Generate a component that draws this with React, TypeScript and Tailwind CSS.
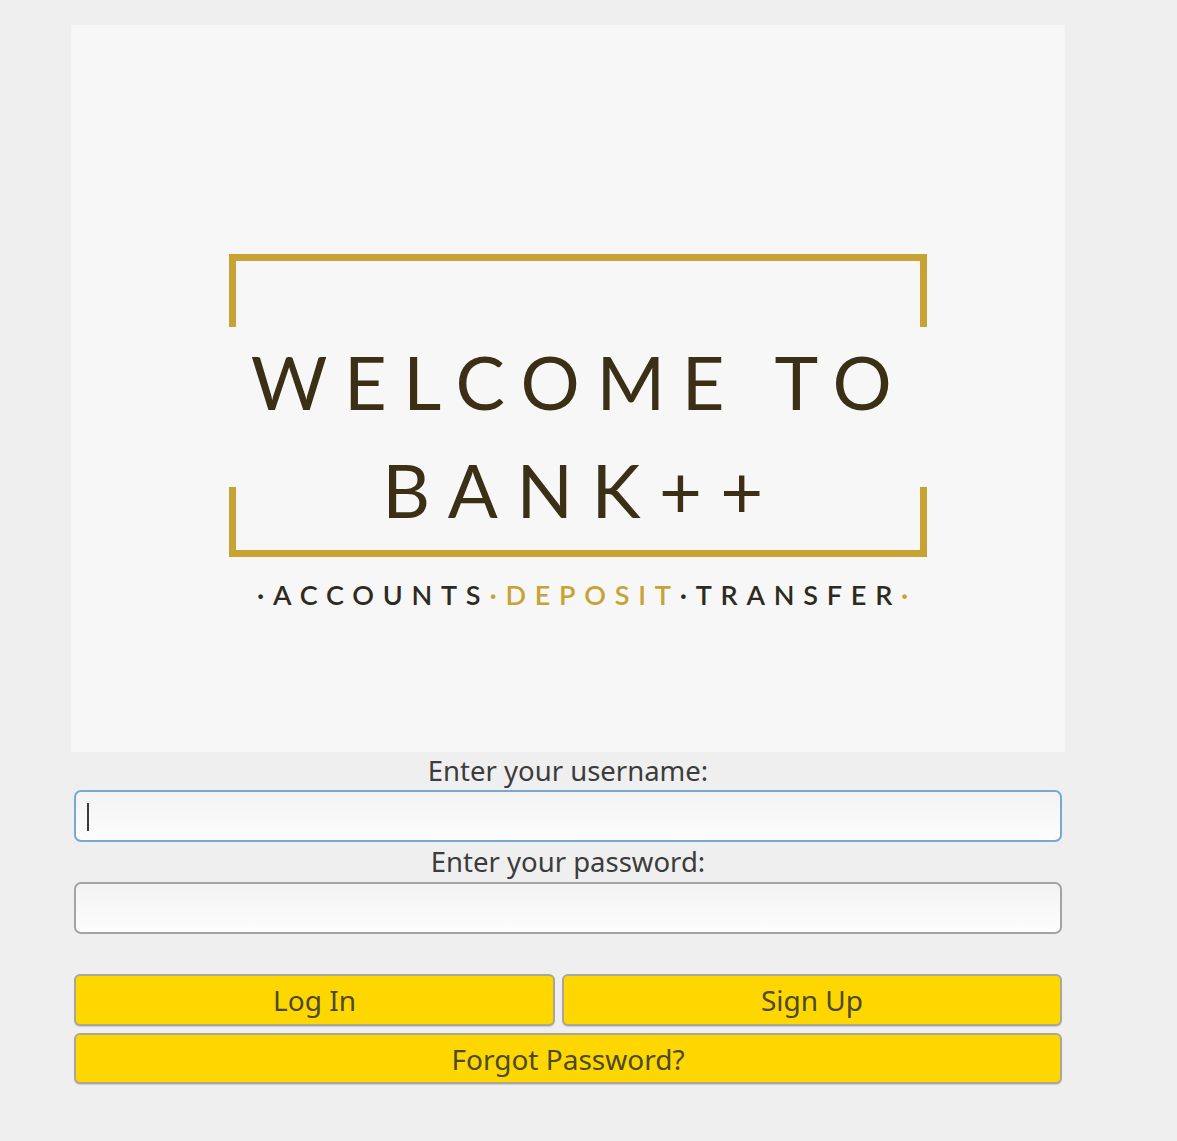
import { useState } from "react";

const Logo = () => {
	return (
		<div className="relative w-[698px] h-[303px] flex flex-col items-center">
			<svg className="absolute inset-0" width="698" height="303" viewBox="0 0 698 303">
				<path d="M3.5 73 V3.5 H694.5 V73" fill="none" stroke="#c9a234" strokeWidth="7" />
				<path d="M3.5 233 V299.5 H694.5 V233" fill="none" stroke="#c9a234" strokeWidth="7" />
			</svg>
			<div className="mt-[91px] text-[74px] leading-[74px] tracking-[0.225em] pl-[3px] text-[#3b3016] font-['Lato',sans-serif]">WELCOME TO</div>
			<div className="mt-[34px] text-[74px] leading-[74px] tracking-[0.25em] pl-[8px] text-[#3b3016] font-['Lato',sans-serif]">BANK++</div>
		</div>
	);
};

const Tagline = () => {
	return (
		<div className="mt-[23px] ml-[18px] text-[27px] leading-[30px] tracking-[0.325em] text-[#2e2a20] font-['Lato',sans-serif] font-semibold whitespace-nowrap">
			<span>·ACCOUNTS</span>
			<span className="text-[#c9a234]">·DEPOSIT</span>
			<span>·TRANSFER</span>
			<span className="text-[#c9a234]">·</span>
		</div>
	);
};

export default function App() {
	const [username, setUsername] = useState("");
	const [password, setPassword] = useState("");

	return (
		<div className="w-[1177px] h-[1141px] bg-[#efefef] pt-[25px] font-['Noto_Sans',sans-serif]">
			<div className="ml-[71px] w-[994px] h-[727px] bg-[#f7f7f7] flex flex-col items-center pt-[229px] pl-[20px]">
				<Logo />
				<Tagline />
			</div>
			<div className="ml-[74px] w-[988px] flex flex-col">
				<label className="h-[38px] flex items-center justify-center text-[27.5px] text-[#3c3c3c]">Enter your username:</label>
				<div className="relative">
					<input
						autoFocus
						value={username}
						onChange={(e) => setUsername(e.target.value)}
						className="w-full h-[52px] rounded-[7px] border-2 border-[#79a7d3] bg-gradient-to-b from-[#f3f3f3] to-[#fdfdfd] px-3 text-[22px] outline-none caret-transparent"
					/>
					{username === "" && <span className="absolute left-[13px] top-[13px] w-[2px] h-[28px] bg-[#3a3a3a]" />}
				</div>
				<label className="h-[40px] flex items-center justify-center text-[27.5px] text-[#3c3c3c]">Enter your password:</label>
				<input
					type="password"
					value={password}
					onChange={(e) => setPassword(e.target.value)}
					className="h-[52px] rounded-[7px] border-2 border-[#a3a3a3] bg-gradient-to-b from-[#f3f3f3] to-[#fdfdfd] px-3 text-[22px] outline-none"
				/>
				<div className="mt-[40px] flex gap-[7px]">
					<button className="w-[481px] h-[52px] rounded-[6px] border-2 border-[#aaa69a] bg-[#ffd700] text-[28px] text-[#4b4a25] shadow-[0_1px_1px_rgba(0,0,0,0.15)]">Log In</button>
					<button className="flex-1 h-[52px] rounded-[6px] border-2 border-[#aaa69a] bg-[#ffd700] text-[28px] text-[#4b4a25] shadow-[0_1px_1px_rgba(0,0,0,0.15)]">Sign Up</button>
				</div>
				<button className="mt-[7px] h-[51px] rounded-[6px] border-2 border-[#aaa69a] bg-[#ffd700] text-[28px] text-[#4b4a25] shadow-[0_1px_1px_rgba(0,0,0,0.15)]">Forgot Password?</button>
			</div>
		</div>
	);
}
